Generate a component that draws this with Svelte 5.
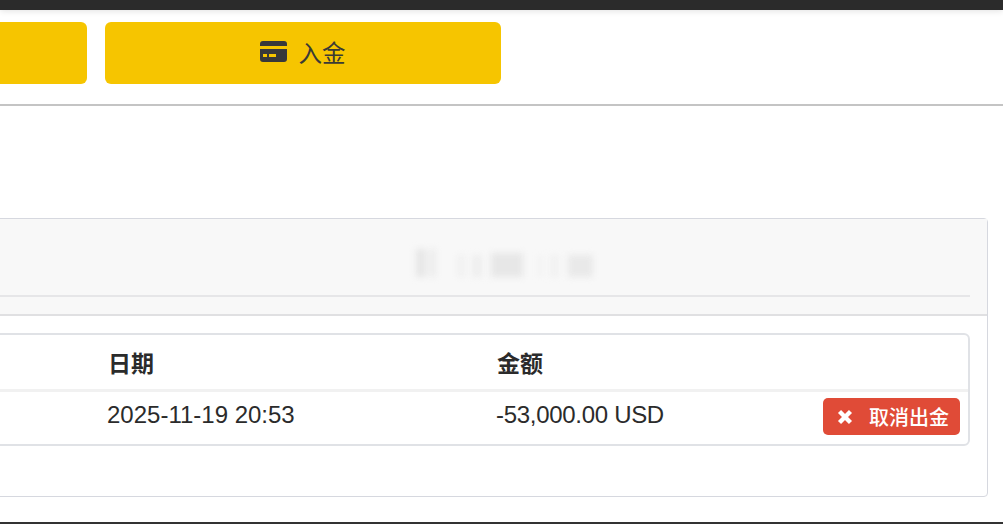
<script>
  const smudges = [
    { w: 10, h: 28, o: 0.9 },
    { w: 3, h: 0, o: 0 },
    { w: 7, h: 28, o: 0.6 },
    { w: 22, h: 0, o: 0 },
    { w: 6, h: 22, o: 0.45 },
    { w: 9, h: 0, o: 0 },
    { w: 8, h: 22, o: 0.55 },
    { w: 10, h: 0, o: 0 },
    { w: 32, h: 24, o: 0.85 },
    { w: 15, h: 0, o: 0 },
    { w: 4, h: 22, o: 0.25 },
    { w: 9, h: 0, o: 0 },
    { w: 7, h: 22, o: 0.4 },
    { w: 10, h: 0, o: 0 },
    { w: 25, h: 22, o: 0.75 }
  ];
</script>

<div class="page">
  <div class="topbar"></div>

  <div class="content">
    <div class="actions">
      <button class="action" aria-label="出金"></button>
      <button class="action">
        <svg class="card-icon" viewBox="0 0 27 21" aria-hidden="true">
          <path d="M3 0h21a3 3 0 0 1 3 3v2H0V3a3 3 0 0 1 3-3z" />
          <path fill-rule="evenodd" d="M0 8h27v10a3 3 0 0 1-3 3H3a3 3 0 0 1-3-3zM3 13v3h4v-3zM9 13v3h7v-3z" />
        </svg>
        <span>入金</span>
      </button>
    </div>

    <hr class="rule" />

    <section class="panel">
      <header class="panel-head">
        <div class="title-row">
          <div class="blurred-title" aria-hidden="true">
            {#each smudges as s}
              <i style="width:{s.w}px;height:{s.h}px;opacity:{s.o}"></i>
            {/each}
          </div>
        </div>
      </header>

      <div class="panel-body">
        <table>
          <colgroup>
            <col class="col-first" />
            <col class="col-date" />
            <col class="col-amount" />
            <col />
          </colgroup>
          <thead>
            <tr>
              <th></th>
              <th>日期</th>
              <th>金额</th>
              <th></th>
            </tr>
          </thead>
          <tbody>
            <tr>
              <td></td>
              <td>2025-11-19 20:53</td>
              <td class="amount">-53,000.00 USD</td>
              <td class="cell-action">
                <button class="cancel">
                  <svg class="x-icon" viewBox="0 0 14 14" aria-hidden="true">
                    <path d="M2.2 2.2l9.6 9.6M11.8 2.2l-9.6 9.6" />
                  </svg>
                  <span>取消出金</span>
                </button>
              </td>
            </tr>
          </tbody>
        </table>
      </div>
    </section>
  </div>

  <div class="bottom-line"></div>
</div>

<style>
  :global(body) {
    margin: 0;
    background: #fff;
  }

  .page {
    width: 1003px;
    height: 524px;
    overflow: hidden;
    display: flex;
    flex-direction: column;
    font-family: "Liberation Sans", "Noto Sans CJK SC", sans-serif;
    color: #2b2b2b;
  }

  .topbar {
    height: 10px;
    flex: none;
    background: #2b2b2b;
    box-shadow: 0 1px 6px rgba(0, 0, 0, 0.12);
  }

  .content {
    flex: 1;
    margin-left: -320px;
    width: 1323px;
    display: flex;
    flex-direction: column;
  }

  .actions {
    display: flex;
    gap: 18px;
    padding: 12px 0 0 11px;
  }

  .action {
    width: 396px;
    height: 62px;
    border: 0;
    border-radius: 6px;
    background: #f6c500;
    color: #3a3a36;
    font: inherit;
    font-size: 23.5px;
    display: flex;
    align-items: center;
    justify-content: center;
    gap: 12px;
    padding: 0 1px 3px 0;
  }

  .card-icon {
    width: 27px;
    height: 21px;
    fill: #38383a;
  }

  .rule {
    margin: 20px 0 0;
    height: 2px;
    border: 0;
    background: #c4c4c4;
  }

  .panel {
    margin: 112px 0 0 11px;
    width: 1297px;
    height: 279px;
    box-sizing: border-box;
    border: 1px solid #d6d8df;
    border-radius: 4px;
    background: #fff;
  }

  .panel-head {
    height: 97px;
    box-sizing: border-box;
    padding: 0 17px;
    background: #f8f8f8;
    border-bottom: 2px solid #e0e0e2;
  }

  .title-row {
    height: 78px;
    box-sizing: border-box;
    border-bottom: 2px solid #e6e6e8;
    padding: 30px 0 0 707px;
  }

  .blurred-title {
    display: flex;
    align-items: flex-end;
    height: 28px;
    filter: blur(3px);
  }

  .blurred-title i {
    display: block;
    flex: none;
    background: #e4e4e4;
  }

  .panel-body {
    padding: 17px 17px 0;
  }

  table {
    width: 100%;
    table-layout: fixed;
    border-collapse: separate;
    border-spacing: 0;
    border: 2px solid #e0e2e6;
    border-radius: 6px;
    font-size: 24px;
  }

  .col-first {
    width: 386px;
  }

  .col-date {
    width: 389px;
  }

  .col-amount {
    width: 327px;
  }

  th {
    height: 54px;
    padding: 0 11px;
    text-align: left;
    font-size: 23px;
    font-weight: 700;
    color: #2b2b2b;
    border-bottom: 3px solid #f1f1f1;
  }

  td {
    height: 45px;
    padding: 0 10px 7px;
    white-space: nowrap;
    color: #2b2b2b;
  }

  .amount {
    letter-spacing: -0.3px;
  }

  .cell-action {
    padding: 0 0 3px 10px;
  }

  .cancel {
    width: 137px;
    height: 37px;
    border: 0;
    border-radius: 5px;
    background: #e04b37;
    color: #fff;
    font: inherit;
    font-size: 20px;
    font-weight: 500;
    display: flex;
    align-items: center;
    gap: 16px;
    padding: 0 0 0 14px;
  }

  .x-icon {
    width: 16px;
    height: 16px;
    flex: none;
    fill: none;
    stroke: #fff;
    stroke-width: 3.8;
  }

  .bottom-line {
    height: 2px;
    flex: none;
    background: #333;
  }
</style>
